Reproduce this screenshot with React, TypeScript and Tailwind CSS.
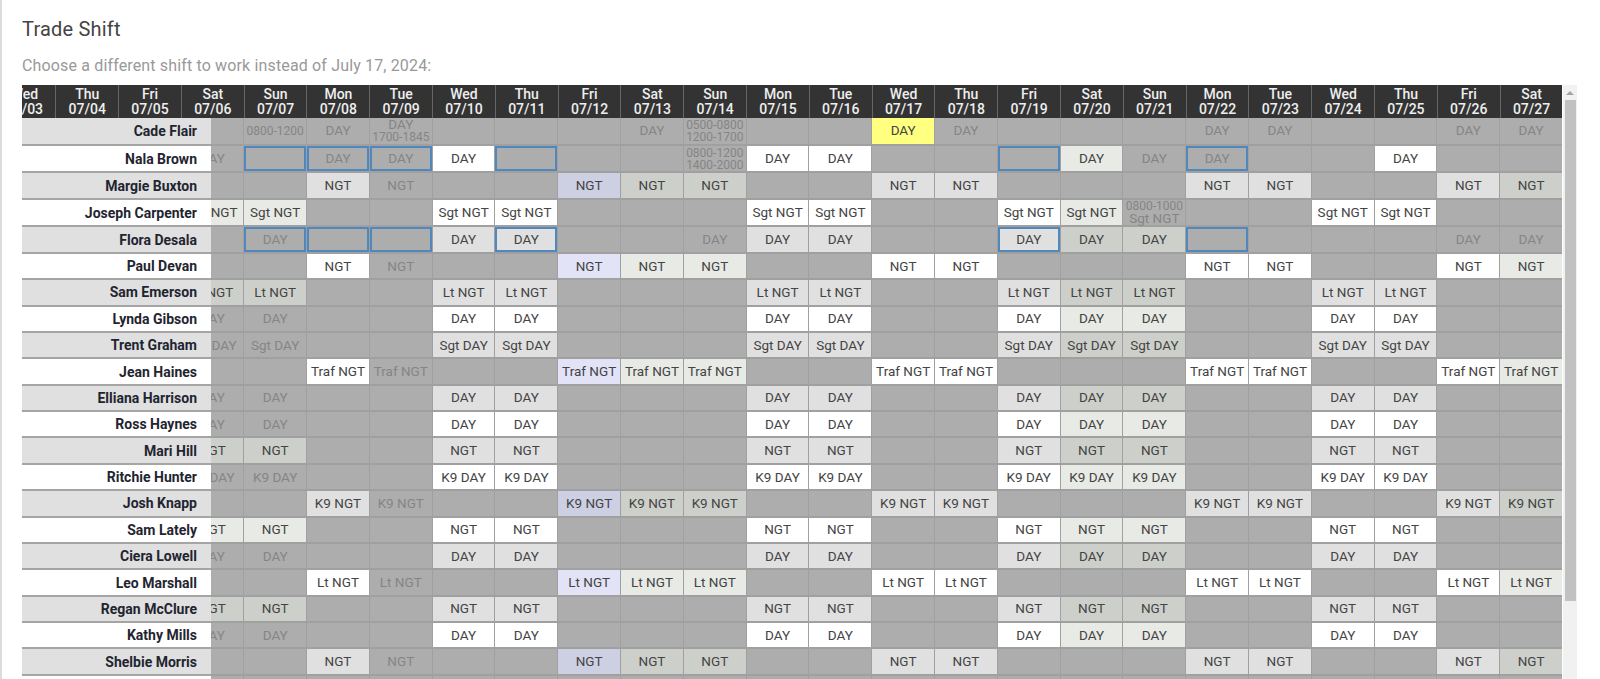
const dayNames = ["Sun", "Mon", "Tue", "Wed", "Thu", "Fri", "Sat"];

// July 2024: the 7th is a Sunday
const dayName = (d: number) => dayNames[d % 7];
const dateLabel = (d: number) => `07/${String(d).padStart(2, "0")}`;

const headerDays = Array.from({ length: 25 }, (_, i) => i + 3);
const bodyDays = Array.from({ length: 22 }, (_, i) => i + 6);

// "~" = greyed out shift, "#" = outlined in blue, "*" = the shift being traded
type Shifts = Record<number, string>;

const block = (t: string): Shifts => ({
  10: t, 11: t, 15: t, 16: t, 19: t, 20: t, 21: t, 24: t, 25: t,
});

const nights = (t: string): Shifts => ({
  8: t, 9: "~" + t, 12: t, 13: t, 14: t, 17: t, 18: t, 22: t, 23: t, 26: t, 27: t,
});

const rows: { name: string; shifts: Shifts }[] = [
  {
    name: "Cade Flair",
    shifts: {
      7: "~0800-1200", 8: "~DAY", 9: "~DAY\n1700-1845", 13: "~DAY", 14: "~0500-0800\n1200-1700",
      17: "*DAY", 18: "~DAY", 22: "~DAY", 23: "~DAY", 26: "~DAY", 27: "~DAY",
    },
  },
  {
    name: "Nala Brown",
    shifts: {
      6: "~DAY", 7: "#", 8: "#~DAY", 9: "#~DAY", 10: "DAY", 11: "#", 14: "~0800-1200\n1400-2000",
      15: "DAY", 16: "DAY", 19: "#", 20: "DAY", 21: "~DAY", 22: "#~DAY", 25: "DAY",
    },
  },
  { name: "Margie Buxton", shifts: nights("NGT") },
  {
    name: "Joseph Carpenter",
    shifts: { ...block("Sgt NGT"), 6: "Sgt NGT", 7: "Sgt NGT", 21: "~0800-1000\nSgt NGT" },
  },
  {
    name: "Flora Desala",
    shifts: {
      7: "#~DAY", 8: "#", 9: "#", 10: "DAY", 11: "#DAY", 14: "~DAY", 15: "DAY", 16: "DAY",
      19: "#DAY", 20: "DAY", 21: "DAY", 22: "#", 26: "~DAY", 27: "~DAY",
    },
  },
  { name: "Paul Devan", shifts: nights("NGT") },
  { name: "Sam Emerson", shifts: { ...block("Lt NGT"), 6: "Lt NGT", 7: "Lt NGT" } },
  { name: "Lynda Gibson", shifts: { ...block("DAY"), 6: "~DAY", 7: "~DAY" } },
  { name: "Trent Graham", shifts: { ...block("Sgt DAY"), 6: "~Sgt DAY", 7: "~Sgt DAY" } },
  { name: "Jean Haines", shifts: nights("Traf NGT") },
  { name: "Elliana Harrison", shifts: { ...block("DAY"), 6: "~DAY", 7: "~DAY" } },
  { name: "Ross Haynes", shifts: { ...block("DAY"), 6: "~DAY", 7: "~DAY" } },
  { name: "Mari Hill", shifts: { ...block("NGT"), 6: "NGT", 7: "NGT" } },
  { name: "Ritchie Hunter", shifts: { ...block("K9 DAY"), 6: "~K9 DAY", 7: "~K9 DAY" } },
  { name: "Josh Knapp", shifts: nights("K9 NGT") },
  { name: "Sam Lately", shifts: { ...block("NGT"), 6: "NGT", 7: "NGT" } },
  { name: "Ciera Lowell", shifts: { ...block("DAY"), 6: "~DAY", 7: "~DAY" } },
  { name: "Leo Marshall", shifts: nights("Lt NGT") },
  { name: "Regan McClure", shifts: { ...block("NGT"), 6: "NGT", 7: "NGT" } },
  { name: "Kathy Mills", shifts: { ...block("DAY"), 6: "~DAY", 7: "~DAY" } },
  { name: "Shelbie Morris", shifts: nights("NGT") },
  { name: "", shifts: {} },
];

function cellBg(day: number, shaded: boolean, traded: boolean) {
  if (traded) return "bg-[#ffff80]";
  const weekend = dayName(day) === "Sat" || dayName(day) === "Sun";
  if (day === 12) return shaded ? "bg-[#cdcfe3]" : "bg-[#e2e3f7]";
  if (weekend) return shaded ? "bg-[#cdd0ca]" : "bg-[#e8eae5]";
  return shaded ? "bg-[#e0e0e0]" : "bg-white";
}

const isTime = (line: string) => /\d{4}-\d{4}/.test(line);

function Cell({ day, spec, shaded }: { day: number; spec?: string; shaded: boolean }) {
  let text = spec ?? "";
  const outlined = text.startsWith("#");
  if (outlined) text = text.slice(1);
  const traded = text.startsWith("*");
  if (traded) text = text.slice(1);
  const muted = text.startsWith("~");
  if (muted) text = text.slice(1);

  const active = text !== "" && !muted;

  return (
    <div className="w-[62.8px] shrink-0 h-full border-b-[2.6px] border-r border-[#a0a0a0]">
      <div
        className={`h-full flex flex-col items-center justify-center text-center whitespace-pre ${
          active ? cellBg(day, shaded, traded) + " text-[#444]" : "bg-[#adadad] text-[#858585]"
        } ${outlined ? "border-2 border-[#5088bd]" : ""}`}
      >
        {text !== "" &&
          text.split("\n").map((line) => (
            <div key={line} className={isTime(line) ? "text-[12px] leading-[12px]" : "text-[13.5px] leading-[13px]"}>
              {line}
            </div>
          ))}
      </div>
    </div>
  );
}

export default function App() {
  return (
    <div className="w-[1600px] h-[679px] overflow-hidden bg-white border-l-2 border-[#dcdcdc] pl-5 flex flex-col font-[Roboto,sans-serif]">
      <h2 className="pt-[17px] text-xl leading-6 tracking-[0.2px] text-[#444]">Trade Shift</h2>
      <p className="mt-[13px] text-base leading-6 tracking-[0.15px] text-[#999]">
        Choose a different shift to work instead of July 17, 2024:
      </p>

      <div className="mt-[7px] flex flex-1 min-h-0">
        <div className="w-[1540px] shrink-0 overflow-hidden">
          <div className="h-[33px] overflow-hidden bg-[#333]">
            <div className="flex -ml-[28.5px] h-full">
              {headerDays.map((d) => (
                <div
                  key={d}
                  className="w-[62.8px] shrink-0 border-r border-[#666] text-center text-sm font-medium leading-[15px] text-[#eee] pt-[2px]"
                >
                  <div>{dayName(d)}</div>
                  <div>{dateLabel(d)}</div>
                </div>
              ))}
            </div>
          </div>

          {rows.map((row, i) => {
            const shaded = i % 2 === 0;
            // rows holding a two line shift come out a little taller
            const tall = Object.values(row.shifts).some((s) => s.includes("\n"));
            return (
              <div key={i} className={`flex ${tall ? "h-[27.7px]" : "h-[26.38px]"}`}>
                <div
                  className={`w-[189px] shrink-0 border-b-[2.6px] border-[#a5a5a5] pr-[14px] flex items-center justify-end text-sm font-bold text-[#1f2530] ${
                    shaded ? "bg-[#e0e0e0]" : "bg-white"
                  }`}
                >
                  {row.name}
                </div>
                <div className="flex-1 min-w-0 overflow-hidden">
                  <div className="flex -ml-[29.5px] h-full">
                    {bodyDays.map((d) => (
                      <Cell key={d} day={d} spec={row.shifts[d]} shaded={shaded} />
                    ))}
                  </div>
                </div>
              </div>
            );
          })}
        </div>

        <div className="ml-[1px] w-[14px] shrink-0 bg-[#f1f1f1] flex flex-col items-center">
          <div className="h-[15px] flex items-center justify-center">
            <div className="w-0 h-0 border-x-[4px] border-x-transparent border-b-[4px] border-b-[#a3a3a3]" />
          </div>
          <div className="w-[11px] h-[501px] bg-[#c1c1c1]" />
        </div>
      </div>
    </div>
  );
}
